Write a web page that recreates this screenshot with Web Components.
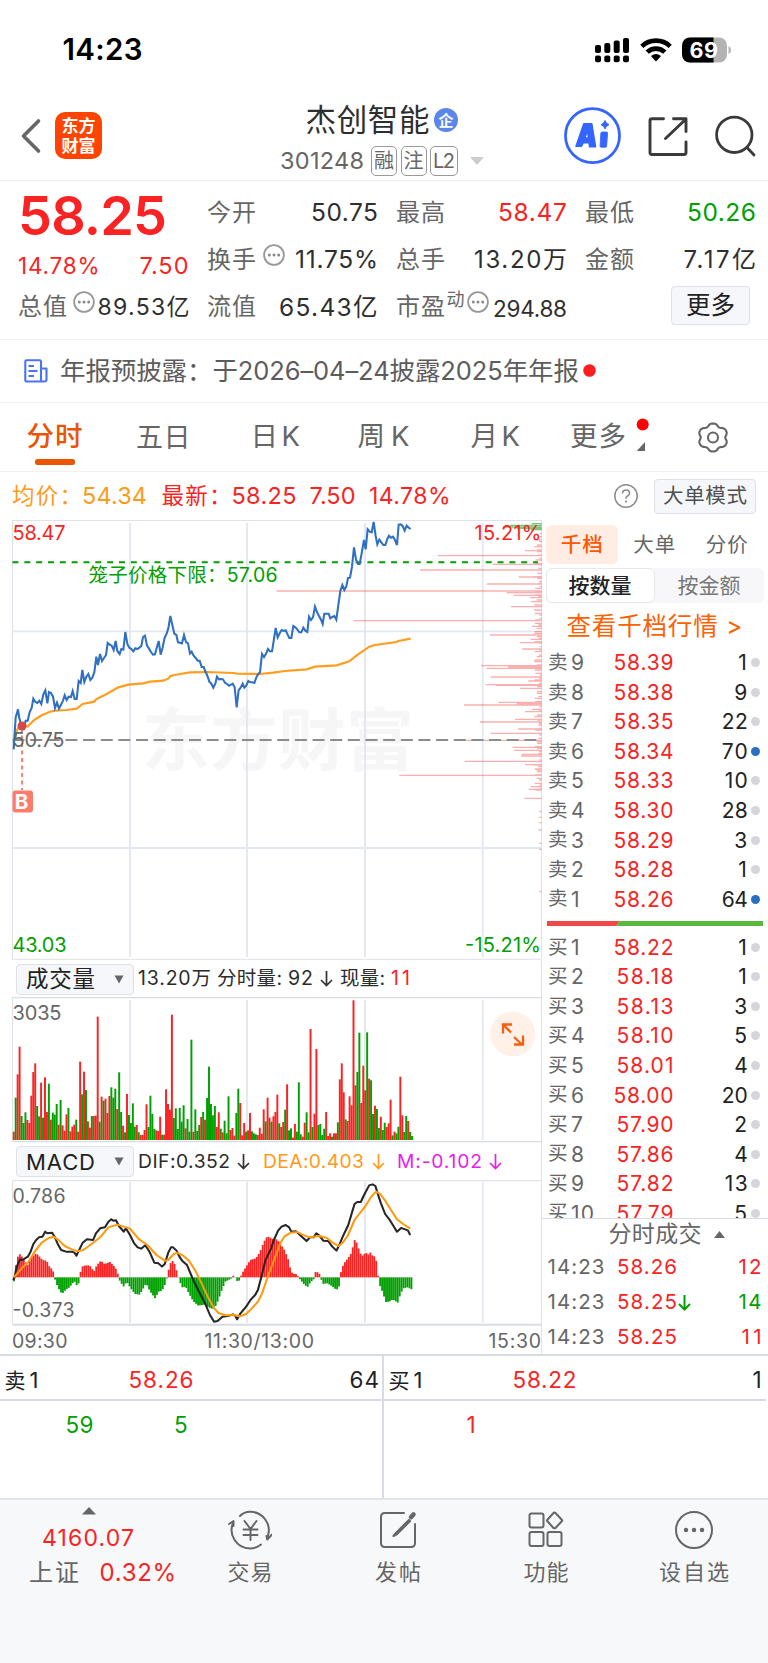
<!DOCTYPE html>
<html lang="zh-CN">
<head>
<meta charset="utf-8">
<title>杰创智能 301248</title>
<style>
html,body{margin:0;padding:0;background:#fff}
body{width:768px;font-family:Inter,"Noto Sans CJK SC",sans-serif;color:#333}
</style>
</head>
<body>
<stock-page></stock-page>
<script>
const RED='#fa2323',GREEN='#00a000',G='#666',ORANGE='#ff9a1a',INK='#2b2b2b';
const BASE='*{box-sizing:border-box}svg{display:block;flex:none}.row{display:flex;align-items:center}';
function define(name,html,host){
  customElements.define(name,class extends HTMLElement{
    connectedCallback(){
      if(this.shadowRoot)return;
      const r=this.attachShadow({mode:'open'});
      r.innerHTML=`<style>${BASE}:host{display:block;${host||''}}</style>`+(typeof html==='function'?html(this):html);
    }
  });
}
/* Text justified to a given width through its letter spacing */
customElements.define('fit-text',class extends HTMLElement{
  connectedCallback(){
    if(this.shadowRoot)return;
    const r=this.attachShadow({mode:'open'}),w=+this.getAttribute('w'),s=+this.getAttribute('s');
    r.innerHTML=`<style>:host{display:block;flex:none;white-space:pre;line-height:1;width:${w}px;font-size:${s}px;color:${this.getAttribute('c')||'inherit'};font-weight:${this.getAttribute('b')||400}}span{display:inline-block}</style><span><slot></slot></span>`;
    const sp=r.querySelector('span'),n=[...this.textContent].length;
    if(n>1)sp.style.letterSpacing=((w-sp.getBoundingClientRect().width)/(n-1)).toFixed(3)+'px';
  }
});
const T=(w,s,c,t,b)=>`<fit-text w="${w}" s="${s}" c="${c}" b="${b||400}">${t}</fit-text>`;
/* A flex row whose items are given as [start, width, html]; gaps become margins */
function row(h,items,start=0,css=''){
  let x=start;
  return `<div class="row" style="height:${h}px;${css}">`+items.map(([l,w,html])=>{
    const m=l-x;x=l+w;
    return `<div style="flex:none;width:${w}px;margin-left:${m.toFixed(2)}px">${html}</div>`;
  }).join('')+'</div>';
}
const txt=(x,w,s,c,t,b)=>[x,w,T(w,s,c,t,b)];

define('status-bar',()=>row(99,[
  txt(62.500,80,29.5,'#000','14:23',600),
  [595,34,`<svg width="35" height="26" viewBox="0 0 35 26"><g fill="#000"><rect x="0" y="8" width="6" height="8" rx="2"/><rect x="9.3" y="6" width="6" height="10" rx="2"/><rect x="18.7" y="3.5" width="6" height="12.5" rx="2"/><rect x="28" y="1" width="6" height="15" rx="2"/><rect x="0" y="18.6" width="6" height="6.6" rx="2"/><rect x="9.3" y="18.6" width="6" height="6.6" rx="2"/><rect x="18.7" y="18.6" width="6" height="6.6" rx="2"/><rect x="28" y="18.6" width="6" height="6.6" rx="2"/></g></svg>`],
  [640,32,`<svg width="32" height="26" viewBox="0 0 32 26"><g fill="none" stroke="#000" stroke-width="4.6"><path d="M1.8 9.3A20.5 20.5 0 0 1 30.2 9.3"/><path d="M7.2 15.2A12.6 12.6 0 0 1 24.8 15.2"/></g><path d="M11 19Q16 14.8 21 19L16.8 23.8Q16 24.5 15.2 23.8Z"/></svg>`],
  [682,50,`<svg width="50" height="26" viewBox="0 0 50 26"><defs><clipPath id="b"><rect y=".5" width="45" height="25" rx="8"/></clipPath></defs><g clip-path="url(#b)"><rect width="45" height="26" fill="#b3b3b3"/><rect width="31.5" height="26"/></g><path d="M46.5 9.2c3.3 1 3.3 6.800 0 7.800z" fill="#b3b3b3"/><text x="7.500" y="20.800" textLength="28.500" font-size="21.500" font-weight="700" fill="#fff">69</text></svg>`]
]),'height:98px');

define('stock-header',()=>`<style>
.h{display:flex;height:82px}
.tag{height:30px;border:1.300px solid #999;border-radius:5px;display:flex;align-items:center;justify-content:center;color:#666}
.logo{width:47px;height:47px;border-radius:10px;background:#ff4400;color:#fff;font:700 17px/20px "Noto Sans CJK SC",sans-serif;text-align:center;padding-top:3px}
.q{width:24px;height:24px;border-radius:50%;background:#5b86ea;color:#fff;font:700 15px/23px "Noto Sans CJK SC",sans-serif;text-align:center}
</style><div class="h">
<div style="width:279px">${row(75,[[20,22,'<svg width="22" height="36" viewBox="0 0 22 36"><path d="M18.500 3L3.500 18L18.500 33" fill="none" stroke="#666" stroke-width="3.600" stroke-linecap="round" stroke-linejoin="round"/></svg>'],[55,47,'<div class="logo"><div>东方</div><div>财富</div></div>']])}</div>
<div style="width:285px">${row(43,[txt(305.500,124,30.5,'#2e2e2e','杰创智能'),[434,24,'<div class="q">企</div>']],279,'padding-top:1px')}
${row(38,[txt(280,84,23.5,G,'301248'),[371,26,'<div class="tag">'+T(20,20,G,'融')+'</div>'],[400.5,26,'<div class="tag">'+T(20,20,G,'注')+'</div>'],[430,28,'<div class="tag">'+T(22,20,G,'L2')+'</div>'],[470,14,'<svg width="14" height="8"><path d="M0 0H14L7 8Z" fill="#ccc"/></svg>']],279,'padding-top:1px')}</div>
<div>${row(75,[[563,59,`<svg width="59" height="59" viewBox="0 0 59 59"><circle cx="29.500" cy="29.700" r="27" fill="none" stroke="#3565ff" stroke-width="2.800"/><g fill="#3565ff" stroke="#3565ff" stroke-linejoin="round"><path d="M13 40.200L20.800 17.800H28.800L32.600 40.800H26.600L26 36.800H20.200L18.500 40.200ZM21.600 32H25.400L24.700 25Z" fill-rule="evenodd" stroke-width="1.500"/><path d="M37.800 27.200Q38 26 39.200 26H43.500Q44.700 26 44.600 27.200L43.600 40.200Q43.500 41.300 42.300 41.300H38.300Q37.100 41.300 37.100 40.200Z" stroke-width=".8"/><path d="M42 14.500q.9 3.300 4 4.200q-3.100.9-4 4.200q-.9-3.300-4-4.200q3.100-.9 4-4.200z" stroke-width="1"/></g></svg>`],
[646,42,`<svg width="43" height="42" viewBox="0 0 43 42"><g fill="none" stroke="#3a3a3a" stroke-width="2.900" stroke-linejoin="round" stroke-linecap="round"><path d="M17.500 3.800H6Q4 3.800 4 5.800V37.500Q4 39.500 6 39.500H38Q40 39.500 40 37.500V27"/><path d="M19.500 23.500L40 4M27.500 3.800H40V16.500"/></g></svg>`],
[714,42,`<svg width="42" height="42" viewBox="0 0 42 42"><g fill="none" stroke="#3a3a3a" stroke-width="2.800" stroke-linecap="round"><circle cx="20.300" cy="19.800" r="17.700"/><path d="M33 32.500L40 40"/></g></svg>`]],564)}</div></div>`,'height:83px;border-bottom:1.500px solid #ececef');

const DOTS='<svg width="22" height="22" viewBox="0 0 22 22"><circle cx="11" cy="11" r="9.900" fill="none" stroke="#999" stroke-width="1.800"/><g fill="#888"><circle cx="6.300" cy="11" r="1.500"/><circle cx="11" cy="11" r="1.500"/><circle cx="15.700" cy="11" r="1.500"/></g></svg>';
const up=(s,n)=>`<div style="padding-bottom:${n}px">${s}</div>`;
define('quote-panel',()=>{
 const c='#2e2e2e';
 return `<style>.g{display:flex}.btn{width:79px;height:39px;border:1.500px solid #dfe1e8;border-radius:4px;background:#f6f7fa;display:flex;align-items:center;justify-content:center}</style><div class="g"><div style="width:200px">
${row(69,[txt(18,149,54,RED,'58.25',600)])}
${row(31,[txt(18,81.5,22.5,RED,'14.78%'),txt(139.500,49,23.500,RED,'7.50')],0,'padding-top:1px')}
${row(51,[txt(18,49,24,G,'总值'),[73,22,up(DOTS,10)],txt(97.500,92,23,c,'89.53亿')],0,'padding-top:1px')}
</div><div style="width:568px">
${row(63,[txt(207,49,24,G,'今开'),txt(311,67,24.5,c,'50.75'),txt(396,49,24,G,'最高'),txt(498,69,24.5,RED,'58.47'),txt(585,49,24,G,'最低'),txt(687,69,24.5,GREEN,'50.26')],200)}
${row(31,[txt(207,49,24,G,'换手'),[262.5,22,up(DOTS,10)],txt(295,83,24.5,c,'11.75%'),txt(396,49,24,G,'总手'),txt(474,93,24,c,'13.20万'),txt(585,49,24,G,'金额'),txt(683.500,72.500,24,c,'7.17亿')],200)}
${row(64,[txt(207,49,24,G,'流值'),txt(279,98.500,24.5,c,'65.43亿'),txt(396,49,24,G,'市盈'),[446.500,18,up(T(18,18,G,'动'),15)],[467,22,up(DOTS,10)],[493,74,'<div style="padding-top:4px">'+T(74,22.500,c,'294.88')+'</div>'],[671,79,'<div style="padding-bottom:3px"><div class="btn">'+T(49,24.5,'#222','更多')+'</div></div>']],200)}
</div></div>`},'height:159px;border-bottom:1.500px solid #f0f1f3;overflow:hidden');

define('news-bar',()=>row(62,[[24,24,'<svg width="24" height="24" viewBox="0 0 24 24"><g fill="none" stroke="#4a74f0" stroke-width="2.100" stroke-linejoin="round"><path d="M17 22.500H2.500Q1.300 22.500 1.300 21.300V2.500Q1.300 1.300 2.500 1.300H15.800Q17 1.300 17 2.500V22.500H20.500Q22.500 22.500 22.500 20.500V9.500H17"/><path d="M4.500 7H10M4.500 12H13.500M4.500 17H10" stroke-width="2"/></g></svg>'],
 txt(60,519,25.5,'#5c5c5c','年报预披露：于2026–04–24披露2025年年报'),[583,13,'<svg width="13" height="13"><circle cx="6.500" cy="6.500" r="6.300" fill="#fa1e1e"/></svg>']],0,'padding-bottom:1px'),'height:63px;border-bottom:1px solid #f0f1f3');

function gear(){
  let d='';const n=72;
  for(let i=0;i<n;i++){const a=i/n*2*Math.PI,r=13.400+1.300*Math.cos(6*a)-.25*Math.cos(12*a);d+=(i?'L':'M')+(16+r*Math.cos(a+Math.PI/6)*1.03).toFixed(2)+' '+(15.500+r*Math.sin(a+Math.PI/6)*.97).toFixed(2);}
  return `<svg width="32" height="31" viewBox="0 0 32 31"><g fill="none" stroke="#666" stroke-width="2.100" stroke-linejoin="round"><path d="${d}Z"/><circle cx="16" cy="15.500" r="5"/></g></svg>`;
}
define('tab-bar',()=>`<style>.u{margin-left:35px;width:40px;height:6px;border-radius:2.500px;background:#ea5504}</style>`+row(44,[txt(26.5,56,27.5,'#ea5504','分时',500),txt(136,54.500,27,G,'五日'),txt(250.500,49.500,27.500,G,'日K'),txt(357.500,52,27.500,G,'周K'),txt(470.500,49.500,27.500,G,'月K'),txt(570,56,27.5,G,'更多'),
[636,13,'<svg width="13" height="44" viewBox="0 0 13 44"><circle cx="6.700" cy="9.500" r="6" fill="#f00"/><path d="M9 27V36H.8Z" fill="#666"/></svg>'],[697,32,gear()]],0,'margin-top:12px')+'<div class="u"></div>','height:69px;border-bottom:1.500px solid #f0f1f3;overflow:hidden');

define('price-bar',()=>`<style>.b{width:102px;height:35px;border:1.500px solid #dfe1e8;border-radius:4px;background:#f6f7fa;display:flex;align-items:center;justify-content:center}</style>`+row(48,[txt(12,70,22.5,ORANGE,'均价：'),txt(82,65,23.500,ORANGE,'54.34'),txt(161.5,70,22.5,RED,'最新：'),txt(231.5,65,23.500,RED,'58.25'),txt(309.500,46,23.500,RED,'7.50'),txt(369,81.500,23,RED,'14.78%'),
[614,24,'<svg width="24" height="24" viewBox="0 0 24 24"><circle cx="12" cy="12" r="11.200" fill="none" stroke="#8c8c8c" stroke-width="1.500"/><path d="M8.500 9.500q0-3.500 3.500-3.500t3.500 3.200q0 1.800-1.900 2.800t-1.600 2.800" fill="none" stroke="#8c8c8c" stroke-width="1.600"/><circle cx="12" cy="17.500" r="1.100" fill="#8c8c8c"/></svg>'],
[654,102,'<div class="b">'+T(84,20.5,'#505050','大单模式')+'</div>']]),'height:48px');

const st=(x,y,w,s,c,t,b)=>`<text x="${x}" y="${y+s*.364}" textLength="${w}" font-size="${s}" fill="${c}" font-weight="${b||400}">${t}</text>`;
const vlines=(a,b)=>[130,247,365,482.7].map(x=>`<path d="M${x} ${a}V${b}" stroke="#e3e7ee" stroke-width="1.800"/>`).join('');

define('price-chart',()=>{
 const price='41,718 47,622 54,598 58,625 65,650 71,655 77,632 83,632 89,606 95,594 100,566 106,576 112,579 118,572 124,582 130,553 136,541 142,580 147,546 153,549 159,560 165,594 171,578 177,596 183,584 189,572 194,556 200,570 206,560 213,561 218,543 224,567 230,567 236,513 242,519 247,480 253,516 259,500 265,492 271,510 277,503 283,487 289,440 294,465 300,432 306,453 312,444 318,435 323,399 329,404 335,407 341,420 347,393 352,423 359,432 364,417 370,419 376,366 382,402 388,413 394,417 400,424 406,415 412,417 418,413 424,408 429,381 435,377 441,407 447,416 453,426 459,434 465,433 470,414 476,393 482,434 488,412 494,383 500,371 505,355 511,318 517,345 523,371 529,375 534,397 540,398 546,400 552,375 558,396 564,400 570,430 575,425 581,437 587,444 593,452 599,452 605,471 611,471 617,486 623,500 628,515 634,521 640,533 646,521 651,500 657,508 663,507 669,508 675,518 681,522 687,527 693,524 698,521 704,532 710,592 716,540 722,533 728,521 733,533 739,526 745,513 751,517 757,517 763,519 769,502 775,492 780,487 786,432 792,441 798,431 804,417 810,424 816,424 822,387 827,354 833,382 839,370 845,360 851,363 857,361 863,374 868,384 874,384 880,348 886,352 892,358 898,367 904,367 910,353 916,362 922,366 927,320 933,330 939,322 945,290 951,306 957,318 963,329 968,342 973,311 979,311 986,311 991,325 997,321 1003,318 1009,329 1015,285 1021,243 1027,225 1033,240 1039,229 1044,204 1050,203 1056,170 1062,112 1068,148 1074,162 1079,162 1085,130 1092,90 1097,118 1103,58 1109,65 1115,67 1121,36 1127,78 1132,103 1138,89 1144,97 1150,105 1156,105 1162,87 1167,77 1173,83 1179,80 1185,90 1191,105 1196,44 1202,43 1208,48 1214,62 1220,47 1226,53 1232,57';
 const avg='41,700 50,662 60,645 83,650 100,632 125,616 150,605 165,602 200,600 230,596 248,582 283,575 288,568 320,552 355,532 385,524 430,520 450,515 490,512 505,506 511,498 540,492 570,487 620,486 700,489 710,491 780,492 820,488 855,483 920,478 945,470 1010,466 1048,454 1070,436 1108,410 1125,405 1190,396 1195,393 1232,386';
 const chips=[[122,795],[137,534],[163,698],[180,480],[201,776],[222,680],[243,50],[248,740],[256,762],[263,810],[275,812],[290,752],[300,822],[332,280],[349,816],[375,690],[388,812],[398,779],[417,787],[467,663],[471,745],[475,680],[501,692],[513,805],[524,677],[526,708],[535,780],[577,716],[581,770],[585,612],[598,815],[605,795],[628,765],[636,660],[657,774],[670,692],[691,615],[712,757],[721,762],[733,785],[738,783],[754,614],[764,795],[777,825],[796,418],[830,812],[838,806],[865,793],[905,838],[922,838],[938,838],[960,836],[1000,838],[1018,838],[1145,838]];
 let fill='';for(let y=70,i=0;y<850;y+=5,i++){if(i*7%11>6)continue;fill+=`M${845-6-(i*i*13%17)} ${y}H845`;}
 return `<svg width="542" height="440" viewBox="0 520 542 440">
${st(142,740,272,68,'#f6f6f6','东方财富',700)}
<path d="M12.500 960V520.500H542" fill="none" stroke="#dfe2e8" stroke-width="1.200"/>${vlines(523,957)}
<path d="M12.500 631.300H541M12.500 848H541" stroke="#e3e7ee" stroke-width="1.800"/>
<path d="M12.500 959.300H542" stroke="#e6e8ec" stroke-width="1.200"/>
<g transform="translate(260 510) scale(.33333)" fill="none" stroke="#f54040" stroke-opacity=".42" stroke-width="4"><path d="${chips.map(([y,x])=>`M${x} ${y}H845`).join('')}${fill}"/><path d="M815 41H845M750 46H845M730 51H845M770 55H845M812 59H845" stroke="#30a838" stroke-opacity=".65" stroke-width="4"/></g>
<path d="M12.500 562.300H538" stroke="#00a000" stroke-width="2" stroke-dasharray="6 5.830"/>
<path d="M12.500 740H538" stroke="#8c8c8c" stroke-width="1.800" stroke-dasharray="12 5.650"/>
<g transform="translate(0 510) scale(.33333)" fill="none" stroke-linejoin="miter"><polyline points="${avg}" stroke="#ff9d1e" stroke-width="6.500"/><polyline points="${price}" stroke="#2f70c0" stroke-width="6.200"/></g>
<path d="M22 728V790" stroke="#ff6b5b" stroke-width="1.700" stroke-dasharray="4 3.500"/><circle cx="22" cy="726" r="4.500" fill="#d94848"/>
<rect x="12.500" y="790.500" width="20.500" height="22" rx="3" fill="#ff7c6c"/>${st(14.800,801.5,15.500,20.500,'#fff','B',700)}
${st(12.500,533,53,20,RED,'58.47')}${st(474.500,533,67,20,RED,'15.21%')}${st(88.500,575,189,19.5,GREEN,'笼子价格下限：57.06')}${st(12.500,739.500,52,20,G,'50.75')}${st(12.500,945,54,20,GREEN,'43.03')}${st(465,945,76,20,GREEN,'-15.21%')}</svg>`});

define('indicator-picker',el=>`<style>.p{width:118px;height:31px;border:1.500px solid #dfe1e8;border-radius:4px;background:#f6f7fa;display:flex;align-items:center;padding:0 9px;justify-content:space-between}</style><div class="p">${T(69,+el.getAttribute('s'),'#222',el.getAttribute('label'))}<svg width="10" height="9"><path d="M.5 .5H9.500L5 8.500Z" fill="#666"/></svg></div>`);

const VOL='r545 g443 r373 r290 g498 g519 g487 r510 r519 r437 r366 r340 g468 g499 r398 g503 r382 r486 g401 r509 g488 g494 g462 r524 g450 r526 r542 r493 g474 r544 r530 r524 g509 r545 r335 g433 r365 g420 r514 r533 g498 r498 r497 r200 g515 r440 g452 r446 r489 r438 g412 g443 g416 r477 g367 g486 r527 g547 r432 g495 g519 g460 g530 r525 g547 r555 r555 r540 r463 g531 g437 g492 g537 r541 r543 r500 g554 r554 r418 r462 r479 r194 g504 g475 g537 g474 g515 g466 r535 g507 g545 g269 r545 g478 g543 g525 r501 g486 r509 g444 g350 g462 g496 g468 r531 r487 g536 r547 g512 g550 g439 r540 r534 r557 g489 g416 r459 r556 r519 g545 r541 r489 g544 g550 g553 r555 r533 r551 r478 g514 r443 r503 g515 r499 r486 r434 g520 r531 r516 g479 r403 g541 g535 r563 r522 g545 g397 g553 r560 r518 g487 g547 r237 g531 r491 r297 g525 g522 g555 g536 r486 r558 r550 g560 r550 r550 g517 r388 r340 r427 g508 r513 r439 r466 r151 r406 g366 g248 r459 r347 r421 g247 r386 g391 g492 r467 g477 g534 r500 g540 g518 r531 r520 r449 g556 r545 g550 g530 r380 r496 g546 g498 r513 g546 g558'.split(' ');
define('volume-chart',()=>{
 const c='#2b2b2b',p=1195/(VOL.length-1);
 const bars=VOL.map((v,i)=>`<rect x="${((41+i*p-2.700)/3).toFixed(2)}" y="${(950+v.slice(1)/3).toFixed(2)}" width="1.950" height="${((570-v.slice(1))/3).toFixed(2)}" fill="${v[0]=='r'?RED:GREEN}"/>`).join('');
 return row(37,[[16,118,'<indicator-picker label="成交量" s="22.5"></indicator-picker>'],txt(138,73,19.5,c,'13.20万'),txt(217,65,19.5,c,'分时量:'),txt(288,25,19.5,c,'92'),[320,13,'<svg width="13" height="16"><path d="M6.500 0V14.500M1 9L6.500 14.500L12 9" fill="none" stroke="#333" stroke-width="1.700"/></svg>'],txt(340,45,19.5,c,'现量:'),txt(391,19,19.5,RED,'11')],0,'padding-top:1px')+
 `<svg width="542" height="146" viewBox="0 997 542 146"><path d="M12.500 1142V997" stroke="#dfe2e8" stroke-width="1.200"/><path d="M12.500 997.600H542M12.500 1141.600H542" stroke="#d8dbe1" stroke-width="1.400"/>${vlines(1000,1140)}${bars}${st(12.500,1012.500,49,20,G,'3035')}
<circle cx="512.700" cy="1034" r="22.500" fill="#fff0e8"/><g fill="none" stroke="#f26010" stroke-width="2.300"><path d="M503 1033.500V1024.500H512M503.500 1025L511 1032.500M514 1037L522 1044.500M514 1044.500H523V1035.500"/></g></svg>`});

define('macd-chart',()=>{
 const env=[[40,424],[46,372],[52,347],[58,342],[64,352],[72,365],[80,375],[90,352],[104,340],[112,348],[122,360],[134,362],[142,380],[150,388],[156,402],[159,424],[168,445],[178,462],[190,448],[200,442],[208,430],[215,425],[221,437],[226,430],[230,400],[238,377],[258,376],[270,395],[278,376],[290,362],[300,372],[316,366],[326,376],[334,388],[340,405],[345,425],[356,440],[364,425],[376,445],[388,462],[402,464],[412,445],[420,430],[432,455],[446,475],[456,455],[466,452],[476,430],[481,408],[488,375],[494,362],[500,365],[506,385],[512,408],[517,425],[524,442],[534,440],[544,462],[556,484],[570,497],[586,494],[600,502],[614,508],[620,498],[628,480],[638,450],[648,425],[665,416],[671,407],[676,412],[680,412],[684,432],[690,416],[696,400],[708,380],[720,360],[736,355],[748,335],[758,308],[766,292],[774,290],[780,295],[786,298],[796,298],[806,310],[818,330],[828,355],[836,390],[842,402],[852,402],[858,410],[864,420],[874,432],[884,442],[892,428],[902,418],[906,396],[916,397],[922,408],[927,432],[942,430],[954,438],[968,450],[975,440],[979,402],[988,372],[1000,356],[1010,340],[1020,300],[1026,308],[1036,340],[1044,348],[1052,336],[1058,346],[1064,336],[1072,348],[1080,350],[1085,380],[1090,430],[1100,455],[1110,486],[1120,485],[1130,478],[1144,488],[1152,462],[1160,445],[1172,442],[1184,448]];
 let bars='';
 for(let x=40;x<=1185;x+=5.633){
  let k=0;while(k<env.length-2&&env[k+1][0]<x)k++;
  const [a,b]=[env[k],env[k+1]],v=a[1]+(b[1]-a[1])*(x-a[0])/(b[0]-a[0]);
  bars+=`<rect x="${x-2.400}" width="5.300" y="${Math.min(v,412).toFixed(1)}" height="${Math.max(1,Math.abs(v-412)).toFixed(1)}" fill="${v<412?RED:GREEN}"/>`;
 }
 const dif='38,420 42,412 46,390 52,370 58,358 64,360 72,355 80,350 88,335 96,312 104,300 112,292 122,290 130,275 136,280 150,278 158,292 166,312 176,330 190,335 206,335 214,338 220,347 230,325 238,308 250,298 268,300 276,280 288,265 302,262 312,245 320,238 326,242 334,241 342,258 356,275 362,265 374,285 386,310 396,322 406,326 418,316 430,335 444,368 456,370 466,380 474,372 484,338 492,322 498,322 508,332 516,350 524,362 538,375 548,400 556,420 570,450 590,490 604,525 616,545 626,543 640,530 656,528 670,523 676,526 682,538 692,520 708,500 722,478 734,465 742,450 752,410 764,360 780,325 788,300 800,272 810,260 822,255 832,262 838,275 852,274 866,288 882,303 892,292 902,292 910,280 918,286 930,302 944,303 956,320 968,332 976,315 986,290 1002,255 1012,220 1020,192 1028,186 1038,186 1046,168 1056,148 1062,136 1072,133 1080,138 1088,165 1096,190 1108,222 1120,238 1132,258 1142,275 1154,264 1166,268 1174,272 1180,285';
 const dea='40,412 60,388 80,368 100,335 120,308 140,294 154,290 166,298 186,318 206,328 224,334 240,330 268,308 290,290 312,262 338,254 374,266 400,298 424,315 450,345 474,362 484,360 500,342 510,338 528,348 544,362 562,392 580,430 600,475 616,505 630,520 650,526 672,525 690,529 708,522 724,506 742,485 754,460 772,405 790,355 806,310 818,290 836,278 856,276 870,284 890,292 918,288 940,294 960,310 974,318 986,308 1000,288 1020,240 1050,200 1068,170 1082,155 1094,162 1110,185 1128,215 1142,238 1160,252 1180,266';
 const arr=c=>`<svg width="13" height="16"><path d="M6.500 0V14.500M1 9L6.500 14.500L12 9" fill="none" stroke="${c}" stroke-width="1.700"/></svg>`;
 return row(37,[[16,118,'<indicator-picker label="MACD" s="22"></indicator-picker>'],txt(138,92,19.3,INK,'DIF:0.352'),[237,13,arr('#333')],txt(263,101,19.3,ORANGE,'DEA:0.403'),[371.500,13,arr(ORANGE)],txt(397,85,19.3,'#e81ee8','M:-0.102'),[488.500,13,arr('#e81ee8')]])+
 `<svg width="542" height="146" viewBox="0 1180 542 146"><path d="M12.500 1324V1180.700H542" fill="none" stroke="#e0e2e8" stroke-width="1.200"/>${vlines(1182,1323)}<path d="M12.500 1324.800H542" stroke="#d8dbe3" stroke-width="2"/>
 <g transform="translate(0 1140) scale(.34759 .33333)">${bars}<g fill="none" stroke-linejoin="round" stroke-width="6"><polyline points="${dif}" stroke="#262626"/><polyline points="${dea}" stroke="#ff9a10"/></g></g>
 ${st(12.500,1195.500,53,19.5,G,'0.786')}${st(12.500,1309.500,62,19.5,G,'-0.373')}</svg>`+
 row(29,[txt(12,55.5,19.5,G,'09:30'),txt(204.500,109.5,19.5,G,'11:30/13:00'),txt(488.500,52.500,19.5,G,'15:30')],0,'padding-top:2px')},'');

define('chart-column','<price-chart></price-chart><volume-chart></volume-chart><macd-chart></macd-chart>','width:542px;flex:none;border-right:1.200px solid #dfe2e8');

const level=(n,p,q,hot)=>{
 const pw=/58\.1|57|58.01/.test(p)?57:60;
 return row(29.55,[[6,46,`<div class="row">${T(19.500,19.500,G,n[0])}<div style="width:3.500px"></div>${T(n.length>2?23:13,21,G,n.slice(1))}</div>`],
 [131.500-pw,pw,T(pw,21,RED,p)],[150,55.800,`<div class="row" style="justify-content:flex-end">${T(q.length>1?(q[0]=='1'?23:26):(q=='1'?9.500:13.500),21,'#222',q)}</div>`],[209,9,`<svg width="9" height="9"><circle cx="4.500" cy="4.500" r="4.500" fill="${hot?'#2a6ec2':'#d4d6dc'}"/></svg>`]])};
define('order-book',()=>`<style>
.tabs{padding:5px 5px 0 3.500px;display:flex;height:43.500px}.tabs>div{width:72.800px;display:flex;align-items:center;justify-content:center;height:38.500px;padding-top:1px}
.on{background:#ffece3;border-radius:6px}.seg{margin:4.500px 4px 0 3.500px;height:35px;background:#f7f7fa;border-radius:6px;display:flex}.seg>div{width:109px;display:flex;align-items:center;justify-content:center}
.sel{background:#fff;border:1.200px solid #e8e8ec;border-radius:6px}
.more{height:45px;padding:1px 0 0 24.500px;display:flex;align-items:center}
.sell{height:273px}
.buy{height:293px;overflow:hidden;padding-top:6.500px;border-bottom:1.500px solid #d8dbe3}
.bar{height:5px;margin:0 5px}
</style><div class="tabs"><div class="on">${T(42,20.5,'#ff5500','千档',500)}</div><div>${T(42,20.5,G,'大单')}</div><div>${T(42,20.5,G,'分价')}</div></div>
<div class="seg"><div class="sel">${T(63,21,'#222','按数量',500)}</div><div>${T(63,21,'#777','按金额')}</div></div>
<div class="more">${T(176,24.5,'#ff6000','查看千档行情 &gt;')}</div>
<div class="sell">${[['9','58.39','1'],['8','58.38','9'],['7','58.35','22'],['6','58.34','70',1],['5','58.33','10'],['4','58.30','28'],['3','58.29','3'],['2','58.28','1'],['1','58.26','64',1]].map(a=>level('卖'+a[0],a[1],a[2],a[3])).join('')}</div>
<svg class="bar" width="216" height="5"><path d="M0 0H73L69 5H0Z" fill="#f04848"/><path d="M73 0H216V5H69Z" fill="#58b840"/></svg>
<div class="buy">${[['1','58.22','1'],['2','58.18','1'],['3','58.13','3'],['4','58.10','5'],['5','58.01','4'],['6','58.00','20'],['7','57.90','2'],['8','57.86','4'],['9','57.82','13'],['10','57.79','5']].map(a=>level('买'+a[0],a[1],a[2])).join('')}</div>
${row(31,[[66.500,93,T(93,23,G,'分时成交')],[171.500,11,'<svg width="11" height="7"><path d="M0 7H11L5.500 0Z" fill="#666"/></svg>']])}
${[['58.26','12',RED],['58.25','14',GREEN,1],['58.25','11',RED]].map(([p,q,c,d])=>row(34.75,[[5.500,57,T(57,20.5,G,'14:23')],[75,60,T(60,20.5,RED,p)],[135.500,13,d?`<svg width="13" height="17"><path d="M6.500 1V15.500M1 10L6.500 15.500L12 10" fill="none" stroke="${GREEN}" stroke-width="2"/></svg>`:''],[160,59.500,`<div class="row" style="justify-content:flex-end">${T(q=='11'?20:23,20.5,c,q)}</div>`]])).join('')}`,'width:226px;flex:none');

define('market-view','<style>.m{display:flex;height:836px;border-bottom:2px solid #d8dbe3}</style><div class="m"><chart-column></chart-column><order-book></order-book></div>');

define('queue-panel',()=>`<style>.q{display:grid;grid-template-columns:382px 384px;height:142px}.q>div+div{border-left:2px solid #d8dbe3}.t{border-bottom:2px solid #d8dbe3}</style><div class="q"><div><div class="t">${row(43,[[4.500,37,`<div class="row">${T(21,21,'#222','卖')}<div style="width:4px"></div>${T(10,22,'#222','1')}</div>`],txt(128.500,65,22.500,RED,'58.26'),txt(349.500,29.500,22.500,'#222','64')],0,'padding-top:5px')}</div>${row(49,[txt(65.500,28,22.500,GREEN,'59'),txt(174,14,22.500,GREEN,'5')],0,'padding-bottom:1px')}</div>
<div><div class="t">${row(43,[[388.500,37,`<div class="row">${T(21,21,'#222','买')}<div style="width:4px"></div>${T(10,22,'#222','1')}</div>`],txt(512.500,64,22.500,RED,'58.22'),txt(752.500,10,22.500,'#222','1')],384,'padding-top:5px')}</div>${row(49,[txt(466.500,10,22.500,RED,'1')],384,'padding-bottom:1px')}</div></div>`);

define('nav-item',el=>`<style>.n{display:flex;flex-direction:column;align-items:center;width:148px}.i{height:40px}</style><div class="n"><div class="i"><slot></slot></div><div style="margin-top:11px">${T(+el.getAttribute('w'),22,G,el.getAttribute('label'))}</div></div>`);
const ic=b=>`<svg width="44" height="40" viewBox="0 0 44 40" fill="none" stroke="#666" stroke-width="2" stroke-linecap="round" stroke-linejoin="round">${b}</svg>`;
define('bottom-nav',()=>`<style>.f{display:flex;height:165px;background:#f7f8fa;border-top:2px solid #e2e4e8}.idx{width:177px;padding-top:7px}.items{display:flex;padding-top:10px}</style><div class="f"><div class="idx">
${row(8,[[82,14,'<svg width="14" height="8"><path d="M0 7.500H14L7 0Z" fill="#666"/></svg>']])}${row(45,[txt(42,92,23,RED,'4160.07')],0,'padding-top:1px')}${row(25,[txt(29,50,24,G,'上证'),txt(99.500,76.500,24,RED,'0.32%')])}</div>
<div class="items">
<nav-item w="45" label="交易">${ic('<path d="M12 6Q16 1.800 22 1.800A18.500 18.500 0 0 1 39.500 27M44 24.500L39.300 29.500L38.500 26M33 34.500Q28 38.500 22 38.500A18.500 18.500 0 0 1 5.500 12M1 14L5.500 11V16"/><path d="M16.500 11L22.500 19L28.500 11M22.500 19V30M15.500 19.500H29.500M15.500 25H29.500"/>')}</nav-item>
<nav-item w="46" label="发帖">${ic('<path d="M28 3H9Q5 3 5 7V33Q5 37 9 37H35Q39 37 39 33V14"/><path d="M37.500 4.500L35 7.200" stroke-width="4.500"/><path d="M33 10L20 23L17.500 26L21 24L34 11Z" fill="#666" stroke-width="2.200"/>')}</nav-item>
<nav-item w="45" label="功能">${ic('<rect x="5.500" y="3.500" width="14" height="14" rx="2"/><rect x="5.500" y="22" width="14" height="14" rx="2"/><rect x="23.500" y="22" width="14" height="14" rx="2"/><path d="M30.500 2.500Q31 2.500 31.500 3L38 10Q38.500 10.500 38 11L31.500 18Q30.500 18.500 29.500 18L23.200 11Q22.800 10.500 23.200 10L29.500 3Z"/>')}</nav-item>
<nav-item w="70" label="设自选">${ic('<circle cx="22" cy="20" r="18"/><g fill="#666" stroke="none"><circle cx="14" cy="20" r="2.200"/><circle cx="22" cy="20" r="2.200"/><circle cx="30" cy="20" r="2.200"/></g>')}</nav-item>
</div></div>`);

define('stock-page','<status-bar></status-bar><stock-header></stock-header><quote-panel></quote-panel><news-bar></news-bar><tab-bar></tab-bar><price-bar></price-bar><market-view></market-view><queue-panel></queue-panel><bottom-nav></bottom-nav>','width:768px;height:1663px;overflow:hidden;background:#fff');
</script>
</body>
</html>
